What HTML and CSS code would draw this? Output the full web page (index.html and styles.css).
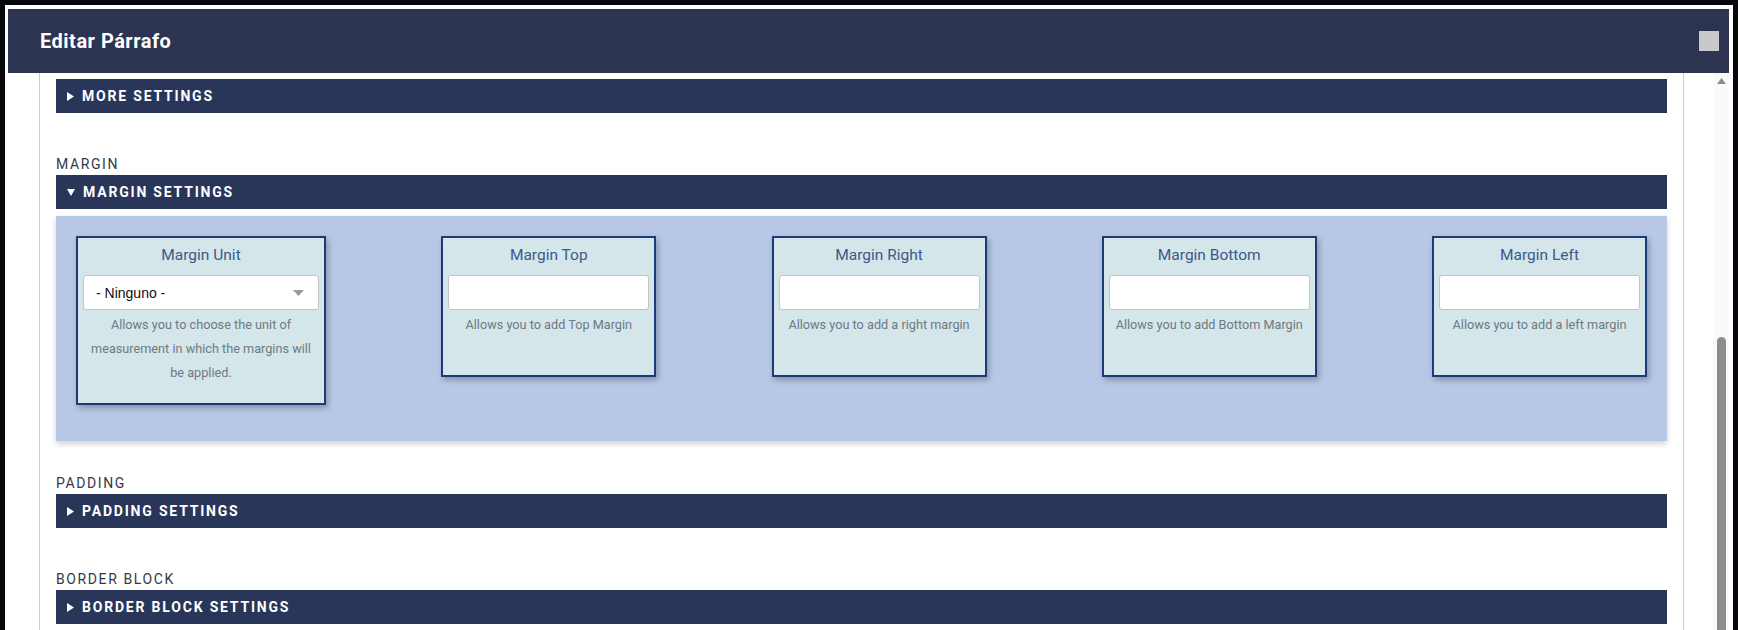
FILE: index.html
```html
<!DOCTYPE html>
<html lang="es">
<head>
<meta charset="utf-8">
<title>Editar Párrafo</title>
<link rel="stylesheet" href="styles.css">
</head>
<body>
<div class="modal">
  <header class="modal-header">
    <h1 class="modal-title">Editar Párrafo</h1>
    <button class="close-btn" type="button" aria-label="Cerrar"></button>
  </header>
  <div class="modal-body">
    <div class="scroll-area">
      <div class="form">
        <section class="group group-first">
          <div class="bar">
            <svg class="tri" width="7" height="9" viewBox="0 0 7 9"><polygon points="0,0 7,4.5 0,9" fill="#fff"/></svg>
            <span class="bar-text">More settings</span>
          </div>
        </section>

        <section class="group group-margin">
          <div class="group-label">Margin</div>
          <div class="bar">
            <svg class="tri" width="8" height="7" viewBox="0 0 8 7"><polygon points="0,0 8,0 4,7" fill="#fff"/></svg>
            <span class="bar-text">Margin settings</span>
          </div>
          <div class="panel">
            <div class="card card-wide">
              <div class="card-title">Margin Unit</div>
              <div class="select-wrap">
                <select class="select"><option>- Ninguno -</option></select>
                <svg class="select-arrow" width="11" height="6" viewBox="0 0 11 6"><polygon points="0,0 11,0 5.5,6" fill="#9a9a9a"/></svg>
              </div>
              <div class="card-desc">Allows you to choose the unit of<br>measurement in which the margins will<br>be applied.</div>
            </div>
            <div class="card">
              <div class="card-title">Margin Top</div>
              <input class="input" type="text">
              <div class="card-desc">Allows you to add Top Margin</div>
            </div>
            <div class="card">
              <div class="card-title">Margin Right</div>
              <input class="input" type="text">
              <div class="card-desc">Allows you to add a right margin</div>
            </div>
            <div class="card">
              <div class="card-title">Margin Bottom</div>
              <input class="input" type="text">
              <div class="card-desc">Allows you to add Bottom Margin</div>
            </div>
            <div class="card">
              <div class="card-title">Margin Left</div>
              <input class="input" type="text">
              <div class="card-desc">Allows you to add a left margin</div>
            </div>
          </div>
        </section>

        <section class="group group-padding">
          <div class="group-label">Padding</div>
          <div class="bar">
            <svg class="tri" width="7" height="9" viewBox="0 0 7 9"><polygon points="0,0 7,4.5 0,9" fill="#fff"/></svg>
            <span class="bar-text">Padding settings</span>
          </div>
        </section>

        <section class="group group-border">
          <div class="group-label">Border block</div>
          <div class="bar">
            <svg class="tri" width="7" height="9" viewBox="0 0 7 9"><polygon points="0,0 7,4.5 0,9" fill="#fff"/></svg>
            <span class="bar-text">Border block settings</span>
          </div>
        </section>
      </div>
    </div>
    <div class="scrollbar">
      <svg class="scroll-up" width="9" height="6" viewBox="0 0 9 6"><polygon points="4.5,0 9,6 0,6" fill="#8a8a8a"/></svg>
      <div class="scroll-thumb"></div>
    </div>
  </div>
</div>
</body>
</html>
```

FILE: styles.css
```css
* {
  box-sizing: border-box;
}

html, body {
  margin: 0;
  padding: 0;
}

body {
  width: 1738px;
  height: 630px;
  overflow: hidden;
  background: #06080b;
  font-family: Roboto, "Liberation Sans", Arial, sans-serif;
}

.modal {
  margin: 5px 5px 0 5px;
  height: 625px;
  background: #ffffff;
  padding: 4px 4px 0 3px;
  display: flex;
  flex-direction: column;
  overflow: hidden;
}

.modal-header {
  flex: 0 0 64px;
  height: 64px;
  background: #2d3452;
  display: flex;
  align-items: center;
  justify-content: space-between;
  padding: 0 10px 0 32px;
}

.modal-title {
  margin: 0;
  color: #ffffff;
  font-size: 20px;
  font-weight: 700;
  letter-spacing: 0.5px;
}

.close-btn {
  width: 20px;
  height: 20px;
  border: 0;
  padding: 0;
  background: #c8c8cd;
}

.modal-body {
  flex: 1 1 auto;
  min-height: 0;
  display: flex;
}

.scroll-area {
  flex: 1 1 auto;
  min-width: 0;
  display: flex;
}

.form {
  flex: 1 1 auto;
  margin: 0 29px 0 31px;
  border-left: 1px solid #cdcdcd;
  border-right: 1px solid #cdcdcd;
  padding: 6px 16px 0 16px;
}

.group-margin {
  margin-top: 43px;
}

.group-padding {
  margin-top: 34px;
}

.group-border {
  margin-top: 43px;
}

.group-label {
  height: 17px;
  line-height: 17px;
  margin-bottom: 2px;
  font-size: 14px;
  color: #333a45;
  text-transform: uppercase;
  letter-spacing: 1.6px;
}

.bar {
  height: 34px;
  background: #29365a;
  display: flex;
  align-items: center;
  padding-left: 11px;
}

.tri {
  display: block;
  margin-right: 8px;
}

.bar-text {
  color: #ffffff;
  font-size: 14px;
  font-weight: 700;
  text-transform: uppercase;
  letter-spacing: 1.8px;
}

.panel {
  margin-top: 7px;
  background: #b7c8e6;
  padding: 20px 20px 36px 20px;
  display: flex;
  justify-content: space-between;
  align-items: flex-start;
  box-shadow: 0 3px 6px rgba(0, 0, 0, 0.18);
}

.card {
  width: 215px;
  min-height: 141px;
  background: #d4e6ea;
  border: 2px solid #1b3a7b;
  padding: 0 5px 18px 5px;
  box-shadow: 2px 3px 6px rgba(0, 0, 0, 0.28);
}

.card-wide {
  width: 250px;
}

.card-title {
  height: 35px;
  line-height: 35px;
  margin-bottom: 2px;
  text-align: center;
  font-size: 15.5px;
  color: #3e5889;
}

.input,
.select {
  display: block;
  width: 100%;
  height: 35px;
  margin: 0;
  background: #ffffff;
  border: 1px solid #c3c3c3;
  border-radius: 3px;
  outline: none;
}

.select-wrap {
  position: relative;
}

.select {
  -webkit-appearance: none;
  appearance: none;
  padding: 0 0 0 12px;
  font-family: "Liberation Sans", Arial, sans-serif;
  font-size: 14px;
  color: #111111;
}

.select-arrow {
  position: absolute;
  right: 15px;
  top: 15px;
}

.card-desc {
  margin-top: 3px;
  line-height: 24px;
  font-size: 12.7px;
  color: #6f7983;
  text-align: center;
  white-space: nowrap;
}

.scrollbar {
  flex: 0 0 16px;
  width: 16px;
  background: #fafafa;
  display: flex;
  flex-direction: column;
  align-items: center;
}

.scroll-up {
  display: block;
  margin-top: 5px;
}

.scroll-thumb {
  margin-top: auto;
  width: 9px;
  height: 293px;
  background: #8d8d8d;
  border-radius: 5px 5px 0 0;
}
```
